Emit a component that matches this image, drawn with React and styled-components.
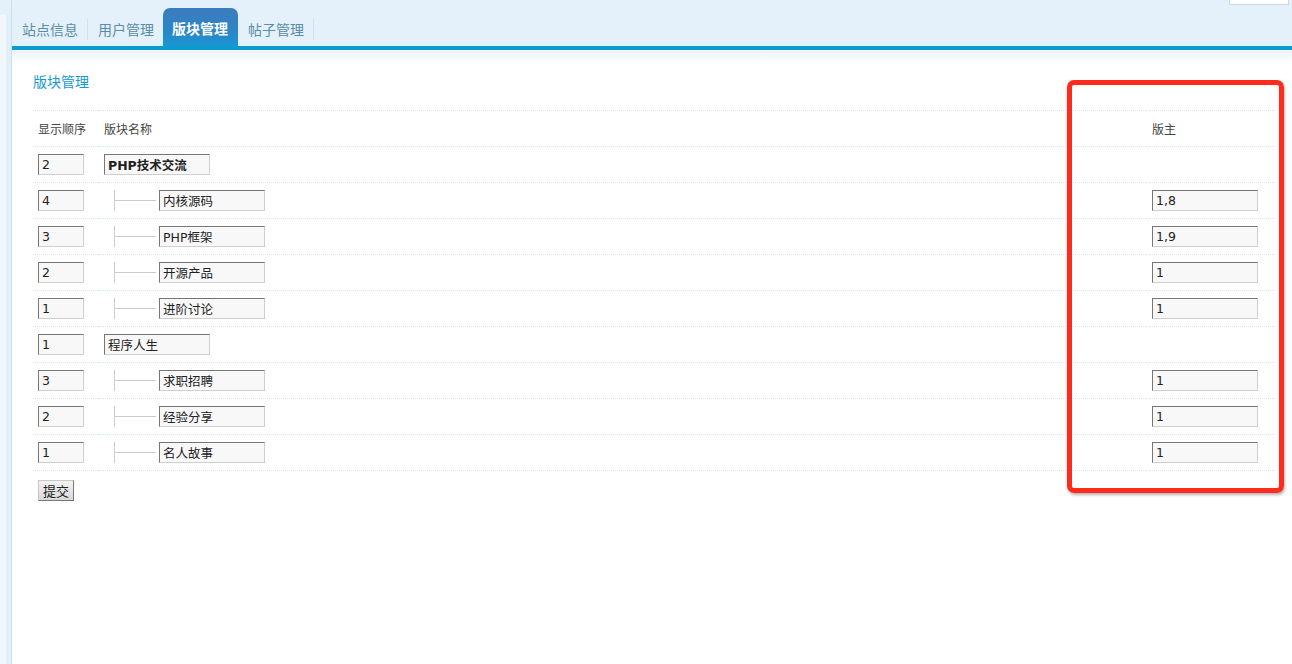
import styled, { createGlobalStyle } from 'styled-components'

const GlobalStyle = createGlobalStyle`
  html, body {
    margin: 0;
    padding: 0;
    background: #ffffff;
    font-family: "DejaVu Sans", "Noto Sans CJK SC", sans-serif;
    color: #333;
  }
`

const tabs = ['站点信息', '用户管理', '版块管理', '帖子管理']

const boards = [
  { order: 2, name: 'PHP技术交流', top: true, bold: true },
  { order: 4, name: '内核源码', mod: '1,8' },
  { order: 3, name: 'PHP框架', mod: '1,9' },
  { order: 2, name: '开源产品', mod: '1' },
  { order: 1, name: '进阶讨论', mod: '1' },
  { order: 1, name: '程序人生', top: true },
  { order: 3, name: '求职招聘', mod: '1' },
  { order: 2, name: '经验分享', mod: '1' },
  { order: 1, name: '名人故事', mod: '1' },
]

const Page = styled.div`
  display: flex;
  min-height: 664px;
`

const SideStrip = styled.div`
  width: 12px;
  flex-shrink: 0;
  background: linear-gradient(to right, #f1f8fd 0, #f1f8fd 6px, #e2eff8 6px, #e2eff8 12px);
  border-right: 1px solid #c9e0ef;
  box-sizing: border-box;
  display: flex;
  flex-direction: column;
`

const StripTop = styled.div`
  height: 15px;
  background: #e4f0fa;
`

const Column = styled.div`
  flex: 1;
  display: flex;
  flex-direction: column;
  position: relative;
`

const Header = styled.div`
  height: 46px;
  background: #e4f0fa;
  display: flex;
  align-items: flex-end;
`

const TabList = styled.ul`
  list-style: none;
  margin: 0;
  padding: 0;
  display: flex;
  align-items: flex-end;
`

const Tab = styled.li`
  display: flex;
  align-items: center;
  box-sizing: border-box;
  padding: ${p => (p.$active ? '2px 10px 0 9px' : '0 9px 0 10px')};
  height: ${p => (p.$active ? '38px' : '22px')};
  margin-bottom: ${p => (p.$active ? '0' : '6px')};
  font-size: 14px;
  font-weight: ${p => (p.$active ? 'bold' : 'normal')};
  color: ${p => (p.$active ? '#ffffff' : '#5a8da8')};
  border-radius: ${p => (p.$active ? '7px 7px 0 0' : '0')};
  background: ${p => (p.$active ? 'linear-gradient(to bottom, #3c7cbd 0%, #2a86c8 60%, #1a96d2 100%)' : 'transparent')};
  border-right: ${p => (p.$active || p.$beforeActive ? 'none' : '1px solid #d2e1ea')};
`

const TopBox = styled.div`
  align-self: flex-start;
  margin-left: auto;
  margin-right: 3px;
  width: 60px;
  height: 5px;
  background: #ffffff;
  border: 1px solid #c6dbe8;
  border-top: none;
  box-sizing: border-box;
`

const BlueLine = styled.div`
  height: 4px;
  background: #0a9bcf;
  border-bottom: 1px solid #ffffff;
`

const Main = styled.div`
  flex: 1;
  padding: 21px 17px 0 21px;
  background: linear-gradient(to bottom, #e9f2fa 0, #ffffff 12px);
`

const Title = styled.h2`
  margin: 0 0 18px;
  font-size: 14px;
  line-height: 20px;
  font-weight: normal;
  color: #1799d0;
`

const Table = styled.table`
  width: 100%;
  border-collapse: collapse;
  font-size: 12px;
`

const Row = styled.tr`
  height: 36px;
  border-bottom: 1px dotted #cfe5f4;
  border-top: ${p => (p.$first ? '1px dotted #cfe5f4' : 'none')};
`

const Cell = styled.td`
  padding: 0 0 0 ${p => p.$pad || 6}px;
  width: ${p => p.$w || 'auto'};
  vertical-align: middle;
  color: #444;
`

const Field = styled.input`
  width: ${p => p.$w}px;
  height: 21px;
  box-sizing: border-box;
  margin: 0;
  padding: 0 3px;
  font-family: "DejaVu Sans", "Noto Sans CJK SC", sans-serif;
  font-size: 12.5px;
  font-weight: ${p => (p.$bold ? 'bold' : 'normal')};
  color: #222;
  background: #f8f8f8;
  border: 1px solid;
  border-color: #767676 #cfcfcf #cfcfcf #767676;
  vertical-align: middle;
`

const NameWrap = styled.div`
  display: flex;
  align-items: center;
`

const Tree = styled.span`
  display: inline-block;
  width: 45px;
  height: 21px;
  margin-left: 10px;
  border-left: 1px solid #cccccc;
  box-sizing: border-box;
  position: relative;
  &::after {
    content: '';
    position: absolute;
    left: 0;
    top: 10px;
    width: 41px;
    border-top: 1px solid #cccccc;
  }
`

const Submit = styled.button`
  margin: 9px 0 0 5px;
  width: 36px;
  height: 21px;
  padding: 0;
  font-family: "Noto Sans CJK SC", sans-serif;
  font-size: 13px;
  color: #222;
  background: linear-gradient(to bottom, #f2f2f2, #d9d9d9);
  border: 1px solid;
  border-color: #c8c8c8 #777 #777 #c8c8c8;
`

const Highlight = styled.div`
  position: absolute;
  left: 1055px;
  top: 80px;
  width: 217px;
  height: 413px;
  box-sizing: border-box;
  border: 5px solid #fe2a1c;
  border-radius: 7px;
  box-shadow: 1px 2px 3px rgba(0, 0, 0, 0.3);
  pointer-events: none;
`

export default function App() {
  return (
    <>
      <GlobalStyle />
      <Page>
        <SideStrip>
          <StripTop />
        </SideStrip>
        <Column>
          <Header>
            <TabList>
              {tabs.map((t, i) => (
                <Tab key={t} $active={i === 2} $beforeActive={i === 1}>{t}</Tab>
              ))}
            </TabList>
            <TopBox />
          </Header>
          <BlueLine />
          <Main>
            <Title>版块管理</Title>
            <Table>
              <tbody>
                <Row $first>
                  <Cell $pad={5} $w="60px">显示顺序</Cell>
                  <Cell>版块名称</Cell>
                  <Cell $w="123px">版主</Cell>
                </Row>
                {boards.map((b, i) => (
                  <Row key={i}>
                    <Cell $pad={5}>
                      <Field $w={46} defaultValue={b.order} />
                    </Cell>
                    <Cell>
                      <NameWrap>
                        {!b.top && <Tree />}
                        <Field $w={106} $bold={b.bold} defaultValue={b.name} />
                      </NameWrap>
                    </Cell>
                    <Cell>
                      {b.mod && <Field $w={106} defaultValue={b.mod} />}
                    </Cell>
                  </Row>
                ))}
              </tbody>
            </Table>
            <Submit>提交</Submit>
          </Main>
          <Highlight />
        </Column>
      </Page>
    </>
  )
}
